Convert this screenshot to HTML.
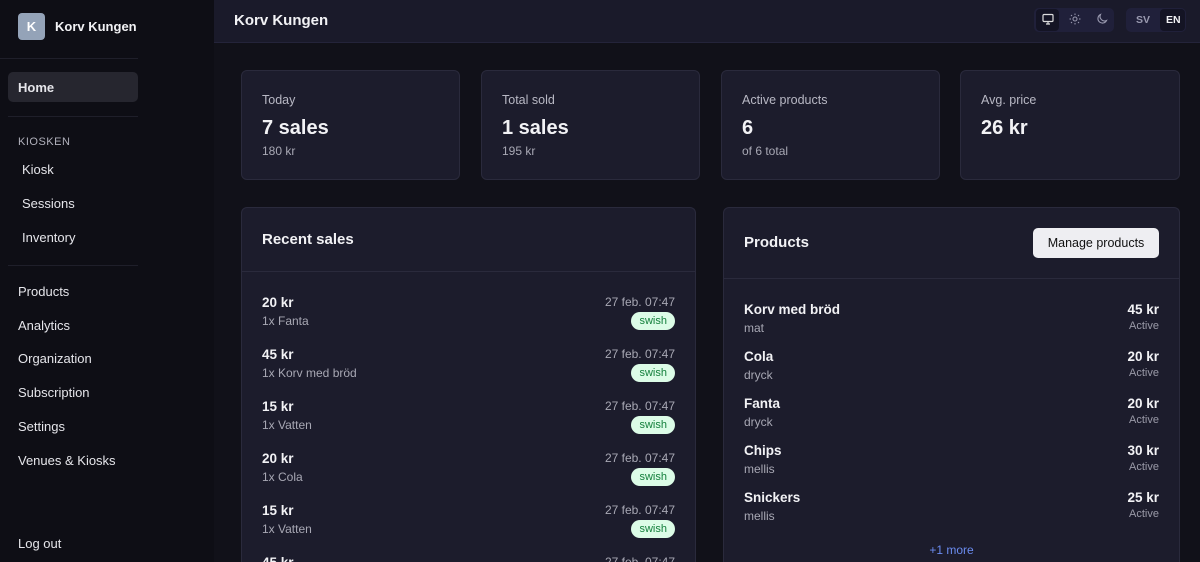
<!DOCTYPE html><html><head><style>
*{margin:0;padding:0;box-sizing:border-box}
html,body{width:1200px;height:562px;overflow:hidden}
body{background:#111119;font-family:"Liberation Sans",sans-serif;color:#f2f2f5;position:relative}
.sb{position:absolute;left:0;top:0;width:214px;height:562px;background:#0e0e15}
.logo{position:absolute;left:18px;top:13px;width:27px;height:27px;border-radius:4px;background:#94a3b8;color:#fff;font-weight:bold;font-size:13px;text-align:center;line-height:27px}
.brand{position:absolute;left:55px;top:19px;font-size:13px;font-weight:bold}
.hr{position:absolute;left:0;width:138px;height:1px;background:#1f1f2a}
.nav{position:absolute;font-size:13px;color:#e5e5ea}
.home{position:absolute;left:8px;top:72px;width:130px;height:30px;border-radius:5px;background:#26262f}
.hd{position:absolute;left:214px;top:0;width:986px;height:43px;background:#1a1a2a;border-bottom:1px solid #24243a}
.card{position:absolute;background:#1c1c2c;border:1px solid #2a2a3c;border-radius:6px;overflow:hidden}
.pan{border-bottom:none;border-radius:6px 6px 0 0}
.lbl{position:absolute;left:20px;top:22px;font-size:12.5px;color:#b8b8c4}
.big{position:absolute;left:20px;top:46px;font-size:20px;font-weight:bold}
.sub{position:absolute;left:20px;top:73px;font-size:12px;color:#a8a8b4}
.row{position:absolute;left:20px;right:20px;height:50px}
.t1{font-size:13.5px;font-weight:bold}
.t2{font-size:12px;color:#a8a8b4;margin-top:4px}
.r{position:absolute;right:0;top:0;text-align:right}
.date{font-size:12px;color:#a8a8b4}
.pill{display:inline-block;margin-top:3px;background:#dcfce7;color:#15803d;font-size:11px;padding:3px 8px;border-radius:10px}
.act{font-size:11px;color:#9a9aa8;margin-top:3px}
</style></head><body>
<div class="sb">
<div class="logo">K</div><div class="brand">Korv Kungen</div>
<div class="hr" style="top:58px"></div>
<div class="home"></div><div class="nav" style="left:18px;top:80px;font-weight:bold">Home</div>
<div class="hr" style="left:8px;top:116px;width:130px"></div>
<div class="nav" style="left:18px;top:136px;font-size:11px;color:#b0b0bb;letter-spacing:.5px">KIOSKEN</div>
<div class="nav" style="left:22px;top:162px">Kiosk</div>
<div class="nav" style="left:22px;top:196px">Sessions</div>
<div class="nav" style="left:22px;top:230px">Inventory</div>
<div class="hr" style="left:8px;top:265px;width:130px"></div>
<div class="nav" style="left:18px;top:284px">Products</div>
<div class="nav" style="left:18px;top:318px">Analytics</div>
<div class="nav" style="left:18px;top:351px">Organization</div>
<div class="nav" style="left:18px;top:385px">Subscription</div>
<div class="nav" style="left:18px;top:419px">Settings</div>
<div class="nav" style="left:18px;top:453px">Venues &amp; Kiosks</div>
<div class="nav" style="left:18px;top:536px">Log out</div>
</div>
<div class="hd">
<div style="position:absolute;left:20px;top:12px;font-size:15px;font-weight:bold">Korv Kungen</div>
<div style="position:absolute;left:820px;top:8px;width:80px;height:24px;border-radius:5px;background:#20203a"></div>
<div style="position:absolute;left:822px;top:9px;width:23px;height:22px;border-radius:4px;background:#141424"></div>
<svg style="position:absolute;left:828px;top:13px" width="12" height="12" viewBox="0 0 12 12" fill="none" stroke="#ddd" stroke-width="1.2"><rect x="1" y="1.5" width="10" height="7" rx="1"/><path d="M4 11h4M6 8.5V11"/></svg>
<svg style="position:absolute;left:855px;top:13px" width="12" height="12" viewBox="0 0 12 12" fill="none" stroke="#9a9ab0" stroke-width="1"><circle cx="6" cy="6" r="2"/><path d="M6 .5v1.5M6 10v1.5M.5 6H2M10 6h1.5M2 2l1 1M9 9l1 1M2 10l1-1M9 3l1-1"/></svg>
<svg style="position:absolute;left:882px;top:13px" width="12" height="12" viewBox="0 0 12 12" fill="none" stroke="#9a9ab0" stroke-width="1.1"><path d="M10.5 7.5A4.5 4.5 0 0 1 4.5 1.5a4.5 4.5 0 1 0 6 6z"/></svg>
<div style="position:absolute;left:912px;top:8px;width:60px;height:24px;border-radius:5px;background:#20203a"></div>
<div style="position:absolute;left:946px;top:9px;width:25px;height:22px;border-radius:4px;background:#141424"></div>
<div style="position:absolute;left:922px;top:14px;font-size:10.5px;font-weight:bold;color:#9a9ab0">SV</div>
<div style="position:absolute;left:952px;top:14px;font-size:10.5px;font-weight:bold">EN</div>
</div>
<div class="card" style="left:241px;top:70px;width:219px;height:110px"><div class="lbl">Today</div><div class="big">7 sales</div><div class="sub">180 kr</div></div>
<div class="card" style="left:481px;top:70px;width:219px;height:110px"><div class="lbl">Total sold</div><div class="big">1 sales</div><div class="sub">195 kr</div></div>
<div class="card" style="left:721px;top:70px;width:219px;height:110px"><div class="lbl">Active products</div><div class="big">6</div><div class="sub">of 6 total</div></div>
<div class="card" style="left:960px;top:70px;width:220px;height:110px"><div class="lbl">Avg. price</div><div class="big">26 kr</div></div>

<div class="card pan" style="left:241px;top:207px;width:455px;height:355px">
<div style="position:absolute;left:20px;top:23px;font-size:15px;font-weight:bold">Recent sales</div>
<div style="position:absolute;left:0;right:0;top:63px;height:1px;background:#2a2a3c"></div>
<div class="row" style="top:87px"><div class="t1">20 kr</div><div class="t2">1x Fanta</div><div class="r"><div class="date">27 feb. 07:47</div><span class="pill">swish</span></div></div>
<div class="row" style="top:139px"><div class="t1">45 kr</div><div class="t2">1x Korv med bröd</div><div class="r"><div class="date">27 feb. 07:47</div><span class="pill">swish</span></div></div>
<div class="row" style="top:191px"><div class="t1">15 kr</div><div class="t2">1x Vatten</div><div class="r"><div class="date">27 feb. 07:47</div><span class="pill">swish</span></div></div>
<div class="row" style="top:243px"><div class="t1">20 kr</div><div class="t2">1x Cola</div><div class="r"><div class="date">27 feb. 07:47</div><span class="pill">swish</span></div></div>
<div class="row" style="top:295px"><div class="t1">15 kr</div><div class="t2">1x Vatten</div><div class="r"><div class="date">27 feb. 07:47</div><span class="pill">swish</span></div></div>
<div class="row" style="top:347px;height:8px;overflow:hidden"><div class="t1">45 kr</div><div class="r"><div class="date">27 feb. 07:47</div></div></div>
</div>

<div class="card pan" style="left:723px;top:207px;width:457px;height:355px">
<div style="position:absolute;left:20px;top:26px;font-size:15px;font-weight:bold">Products</div>
<div style="position:absolute;right:20px;top:20px;width:126px;height:30px;border-radius:5px;background:#eeeef2;color:#111;font-size:12.5px;text-align:center;line-height:30px">Manage products</div>
<div style="position:absolute;left:0;right:0;top:70px;height:1px;background:#2a2a3c"></div>
<div class="row" style="top:94px"><div class="t1">Korv med bröd</div><div class="t2">mat</div><div class="r"><div class="t1">45 kr</div><div class="act">Active</div></div></div>
<div class="row" style="top:141px"><div class="t1">Cola</div><div class="t2">dryck</div><div class="r"><div class="t1">20 kr</div><div class="act">Active</div></div></div>
<div class="row" style="top:188px"><div class="t1">Fanta</div><div class="t2">dryck</div><div class="r"><div class="t1">20 kr</div><div class="act">Active</div></div></div>
<div class="row" style="top:235px"><div class="t1">Chips</div><div class="t2">mellis</div><div class="r"><div class="t1">30 kr</div><div class="act">Active</div></div></div>
<div class="row" style="top:282px"><div class="t1">Snickers</div><div class="t2">mellis</div><div class="r"><div class="t1">25 kr</div><div class="act">Active</div></div></div>
<div style="position:absolute;left:0;right:0;top:335px;text-align:center;font-size:12px;color:#6b8cf0">+1 more</div>
</div>
</body></html>
